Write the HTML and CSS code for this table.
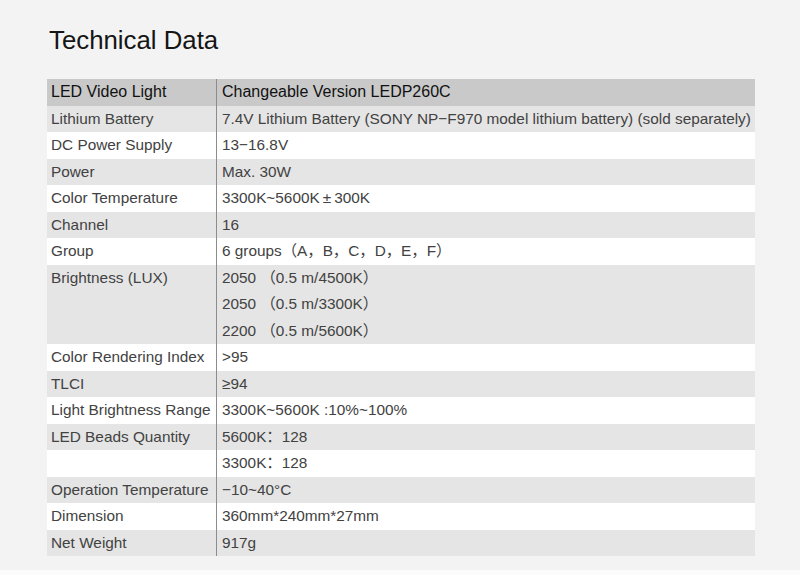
FILE: index.html
```html
<!DOCTYPE html>
<html>
<head>
<meta charset="utf-8">
<link rel="stylesheet" href="styles.css">
</head>
<body>
<div class="page">
  <h1 class="title">Technical Data</h1>
  <div class="spec">
    <div class="row head"><div class="key">LED Video Light</div><div class="val">Changeable Version LEDP260C</div></div>
    <div class="row gray"><div class="key">Lithium Battery</div><div class="val">7.4V Lithium Battery (SONY NP−F970 model lithium battery) (sold separately)</div></div>
    <div class="row"><div class="key">DC Power Supply</div><div class="val">13−16.8V</div></div>
    <div class="row gray"><div class="key">Power</div><div class="val">Max. 30W</div></div>
    <div class="row"><div class="key">Color Temperature</div><div class="val">3300K~5600K&#8201;±&#8201;300K</div></div>
    <div class="row gray"><div class="key">Channel</div><div class="val">16</div></div>
    <div class="row"><div class="key">Group</div><div class="val">6 groups（A，B，C，D，E，F）</div></div>
    <div class="row gray"><div class="key">Brightness (LUX)</div><div class="val"><div>2050 （0.5 m/4500K）</div><div>2050 （0.5 m/3300K）</div><div>2200 （0.5 m/5600K）</div></div></div>
    <div class="row"><div class="key">Color Rendering Index</div><div class="val">&gt;95</div></div>
    <div class="row gray"><div class="key">TLCI</div><div class="val">≥94</div></div>
    <div class="row"><div class="key">Light Brightness Range</div><div class="val">3300K~5600K :10%~100%</div></div>
    <div class="row gray"><div class="key">LED Beads Quantity</div><div class="val">5600K：128</div></div>
    <div class="row"><div class="key"></div><div class="val">3300K：128</div></div>
    <div class="row gray"><div class="key">Operation Temperature</div><div class="val">−10~40°C</div></div>
    <div class="row"><div class="key">Dimension</div><div class="val">360mm*240mm*27mm</div></div>
    <div class="row gray"><div class="key">Net Weight</div><div class="val">917g</div></div>
  </div>
  <div class="foot"></div>
</div>
</body>
</html>
```
FILE: styles.css
```css
html, body {
  margin: 0;
  padding: 0;
  background: #f3f3f3;
}
.page {
  width: 800px;
  height: 575px;
  overflow: hidden;
  padding-left: 47px;
  box-sizing: border-box;
  font-family: "Liberation Sans", "Noto Sans CJK SC", sans-serif;
}
.title {
  margin: 26px 0 0 2px;
  font-size: 25.8px;
  line-height: 29px;
  font-weight: normal;
  color: #151515;
}
.spec {
  margin-top: 24.3px;
  width: 708px;
}
.row {
  display: grid;
  grid-template-columns: 170px 1fr;
  background: #ffffff;
  font-size: 15.35px;
  line-height: 26.5px;
  color: #424242;
}
.row.gray {
  background: #e5e5e5;
}
.row.head {
  background: #c9c9c9;
  font-size: 16px;
  color: #111;
}
.key {
  padding-left: 4px;
  border-right: 1px solid #8c8c8c;
  white-space: nowrap;
}
.val {
  padding-left: 5px;
  white-space: nowrap;
}
.foot {
  margin-top: 14px;
  margin-left: -47px;
  height: 5px;
  background: #fbfbfb;
}
```
